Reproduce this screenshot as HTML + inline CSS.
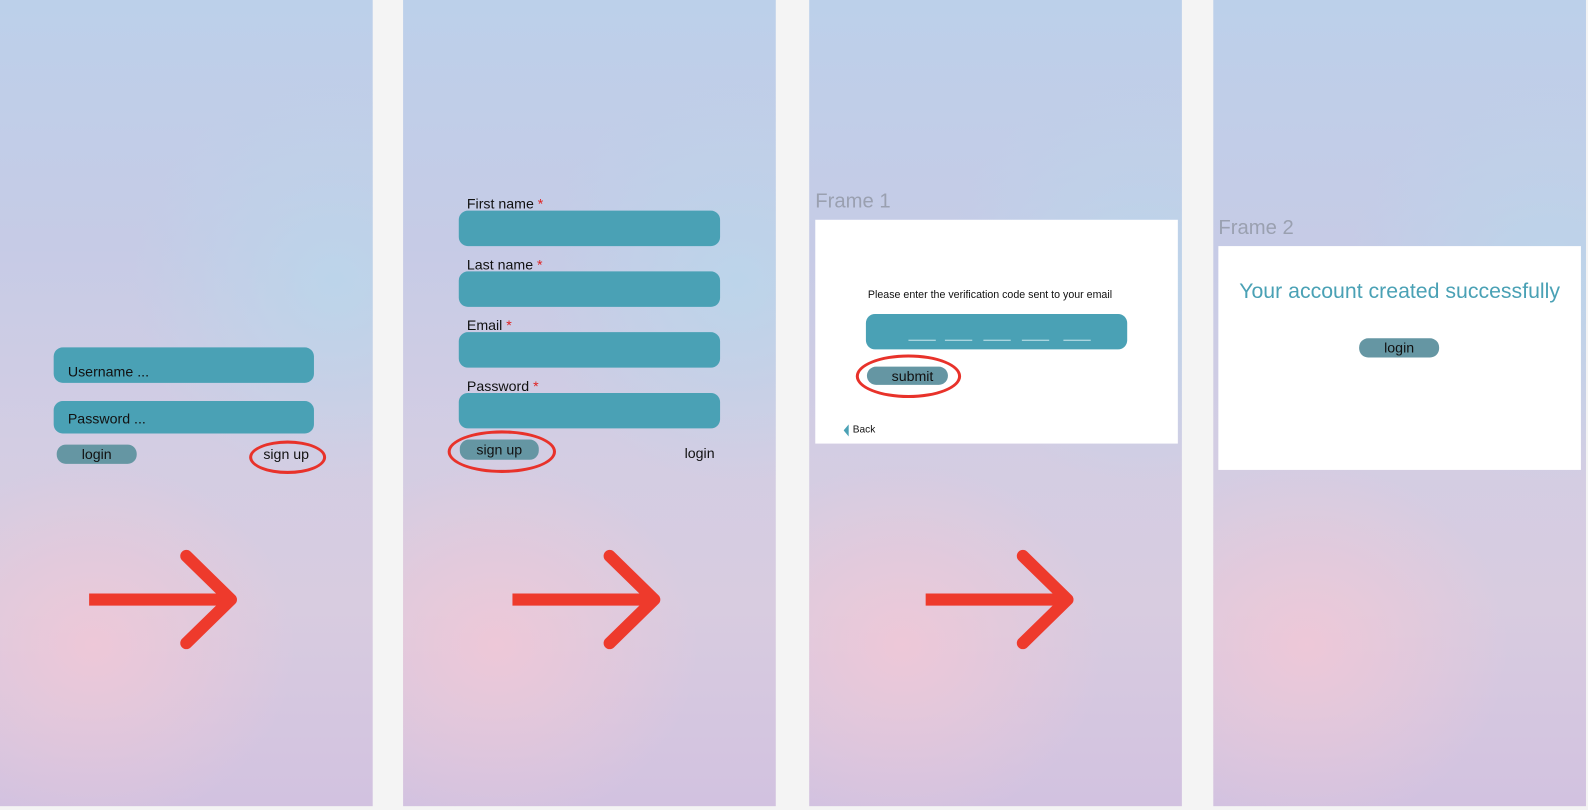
<!DOCTYPE html>
<html><head><style>
body{margin:0;width:1588px;height:806px;background:#f4f4f4;position:relative;overflow:hidden;font-family:"Liberation Sans",sans-serif;}
#w{position:absolute;left:0;top:0;width:1568px;height:800px;transform:scale(1.01276);transform-origin:0 0;}
.p{position:absolute;top:0;height:796px;width:368px;
background:
radial-gradient(ellipse 200px 180px at 25% 80%,rgba(240,200,215,0.9),rgba(240,200,215,0) 100%),
radial-gradient(ellipse 200px 200px at 90% 35%,rgba(185,215,235,0.8),rgba(185,215,235,0) 100%),
linear-gradient(180deg,#bcd0ea 0%,#c6cbe6 30%,#d3cde3 55%,#d8cce0 75%,#d2c2e0 100%);}
.f{position:absolute;background:#4aa1b5;border-radius:9px;}
.b{position:absolute;background:#6596a3;border-radius:9px;font-size:14px;color:#111;text-align:center;}
.t{position:absolute;font-size:14px;color:#111;}
.r{color:#e02020}
.o{position:absolute;border:3px solid #e8322a;border-radius:50%;}
svg.a{position:absolute;}
</style></head><body><div id="w">
<div class="p" style="left:0"></div>
<div class="p" style="left:398px"></div>
<div class="p" style="left:799px"></div>
<div class="p" style="left:1198px"></div>

<div class="f" style="left:53px;top:343px;width:257px;height:35px"></div>
<div class="t" style="left:67px;top:359px">Username ...</div>
<div class="f" style="left:53px;top:396px;width:257px;height:32px"></div>
<div class="t" style="left:67px;top:405px">Password ...</div>
<div class="b" style="left:56px;top:439px;width:79px;height:19px;line-height:19px">login</div>
<div class="t" style="left:260px;top:440px">sign up</div>
<div class="o" style="left:246px;top:435px;width:70px;height:27px"></div>

<div class="t" style="left:461px;top:193px">First name <span class="r">*</span></div>
<div class="f" style="left:453px;top:208px;width:258px;height:35px"></div>
<div class="t" style="left:461px;top:253px">Last name <span class="r">*</span></div>
<div class="f" style="left:453px;top:268px;width:258px;height:35px"></div>
<div class="t" style="left:461px;top:313px">Email <span class="r">*</span></div>
<div class="f" style="left:453px;top:328px;width:258px;height:35px"></div>
<div class="t" style="left:461px;top:373px">Password <span class="r">*</span></div>
<div class="f" style="left:453px;top:388px;width:258px;height:35px"></div>
<div class="b" style="left:454px;top:434px;width:78px;height:20px;line-height:20px">sign up</div>
<div class="o" style="left:442px;top:425px;width:101px;height:36px"></div>
<div class="t" style="left:676px;top:439px">login</div>

<div style="position:absolute;left:805px;top:188px;font-size:20px;color:#9aa0b0">Frame 1</div>
<div style="position:absolute;left:805px;top:217px;width:358px;height:221px;background:#fff"></div>
<div style="position:absolute;left:857px;top:285px;font-size:10.5px;color:#111;white-space:nowrap">Please enter the verification code sent to your email</div>
<div class="f" style="left:855px;top:310px;width:258px;height:35px"></div>
<svg style="position:absolute;left:855px;top:310px" width="258" height="35"><g stroke="#a8d4de" stroke-width="1.3"><line x1="42" y1="26" x2="69" y2="26"/><line x1="78" y1="26" x2="105" y2="26"/><line x1="116" y1="26" x2="143" y2="26"/><line x1="154" y1="26" x2="181" y2="26"/><line x1="195" y1="26" x2="222" y2="26"/></g></svg>
<div class="b" style="left:856px;top:362px;width:80px;height:18px;line-height:18px;padding-left:10px;box-sizing:border-box">submit</div>
<div class="o" style="left:845px;top:350px;width:98px;height:37px"></div>
<svg style="position:absolute;left:833px;top:419px" width="6" height="12"><path d="M5 0L0 6L5 12Z" fill="#4aa1b5"/></svg>
<div style="position:absolute;left:842px;top:419px;font-size:10px;color:#111">Back</div>

<div style="position:absolute;left:1203px;top:214px;font-size:20px;color:#9aa0b0">Frame 2</div>
<div style="position:absolute;left:1203px;top:243px;width:358px;height:221px;background:#fff"></div>
<div style="position:absolute;left:1203px;top:276px;width:358px;text-align:center;font-size:21px;color:#4aa1b5;white-space:nowrap">Your account created successfully</div>
<div class="b" style="left:1342px;top:334px;width:79px;height:19px;line-height:19px">login</div>

<svg class="a" style="left:80px;top:540px" width="170" height="105"><g stroke="#ee3a2c" stroke-width="12" fill="none" stroke-linecap="round" stroke-linejoin="round"><line x1="8" y1="52" x2="148" y2="52" stroke-linecap="butt"/><polyline points="104,9 148,52 104,95"/></g></svg>
<svg class="a" style="left:498px;top:540px" width="170" height="105"><g stroke="#ee3a2c" stroke-width="12" fill="none" stroke-linecap="round" stroke-linejoin="round"><line x1="8" y1="52" x2="148" y2="52" stroke-linecap="butt"/><polyline points="104,9 148,52 104,95"/></g></svg>
<svg class="a" style="left:906px;top:540px" width="170" height="105"><g stroke="#ee3a2c" stroke-width="12" fill="none" stroke-linecap="round" stroke-linejoin="round"><line x1="8" y1="52" x2="148" y2="52" stroke-linecap="butt"/><polyline points="104,9 148,52 104,95"/></g></svg>
</div></body></html>
